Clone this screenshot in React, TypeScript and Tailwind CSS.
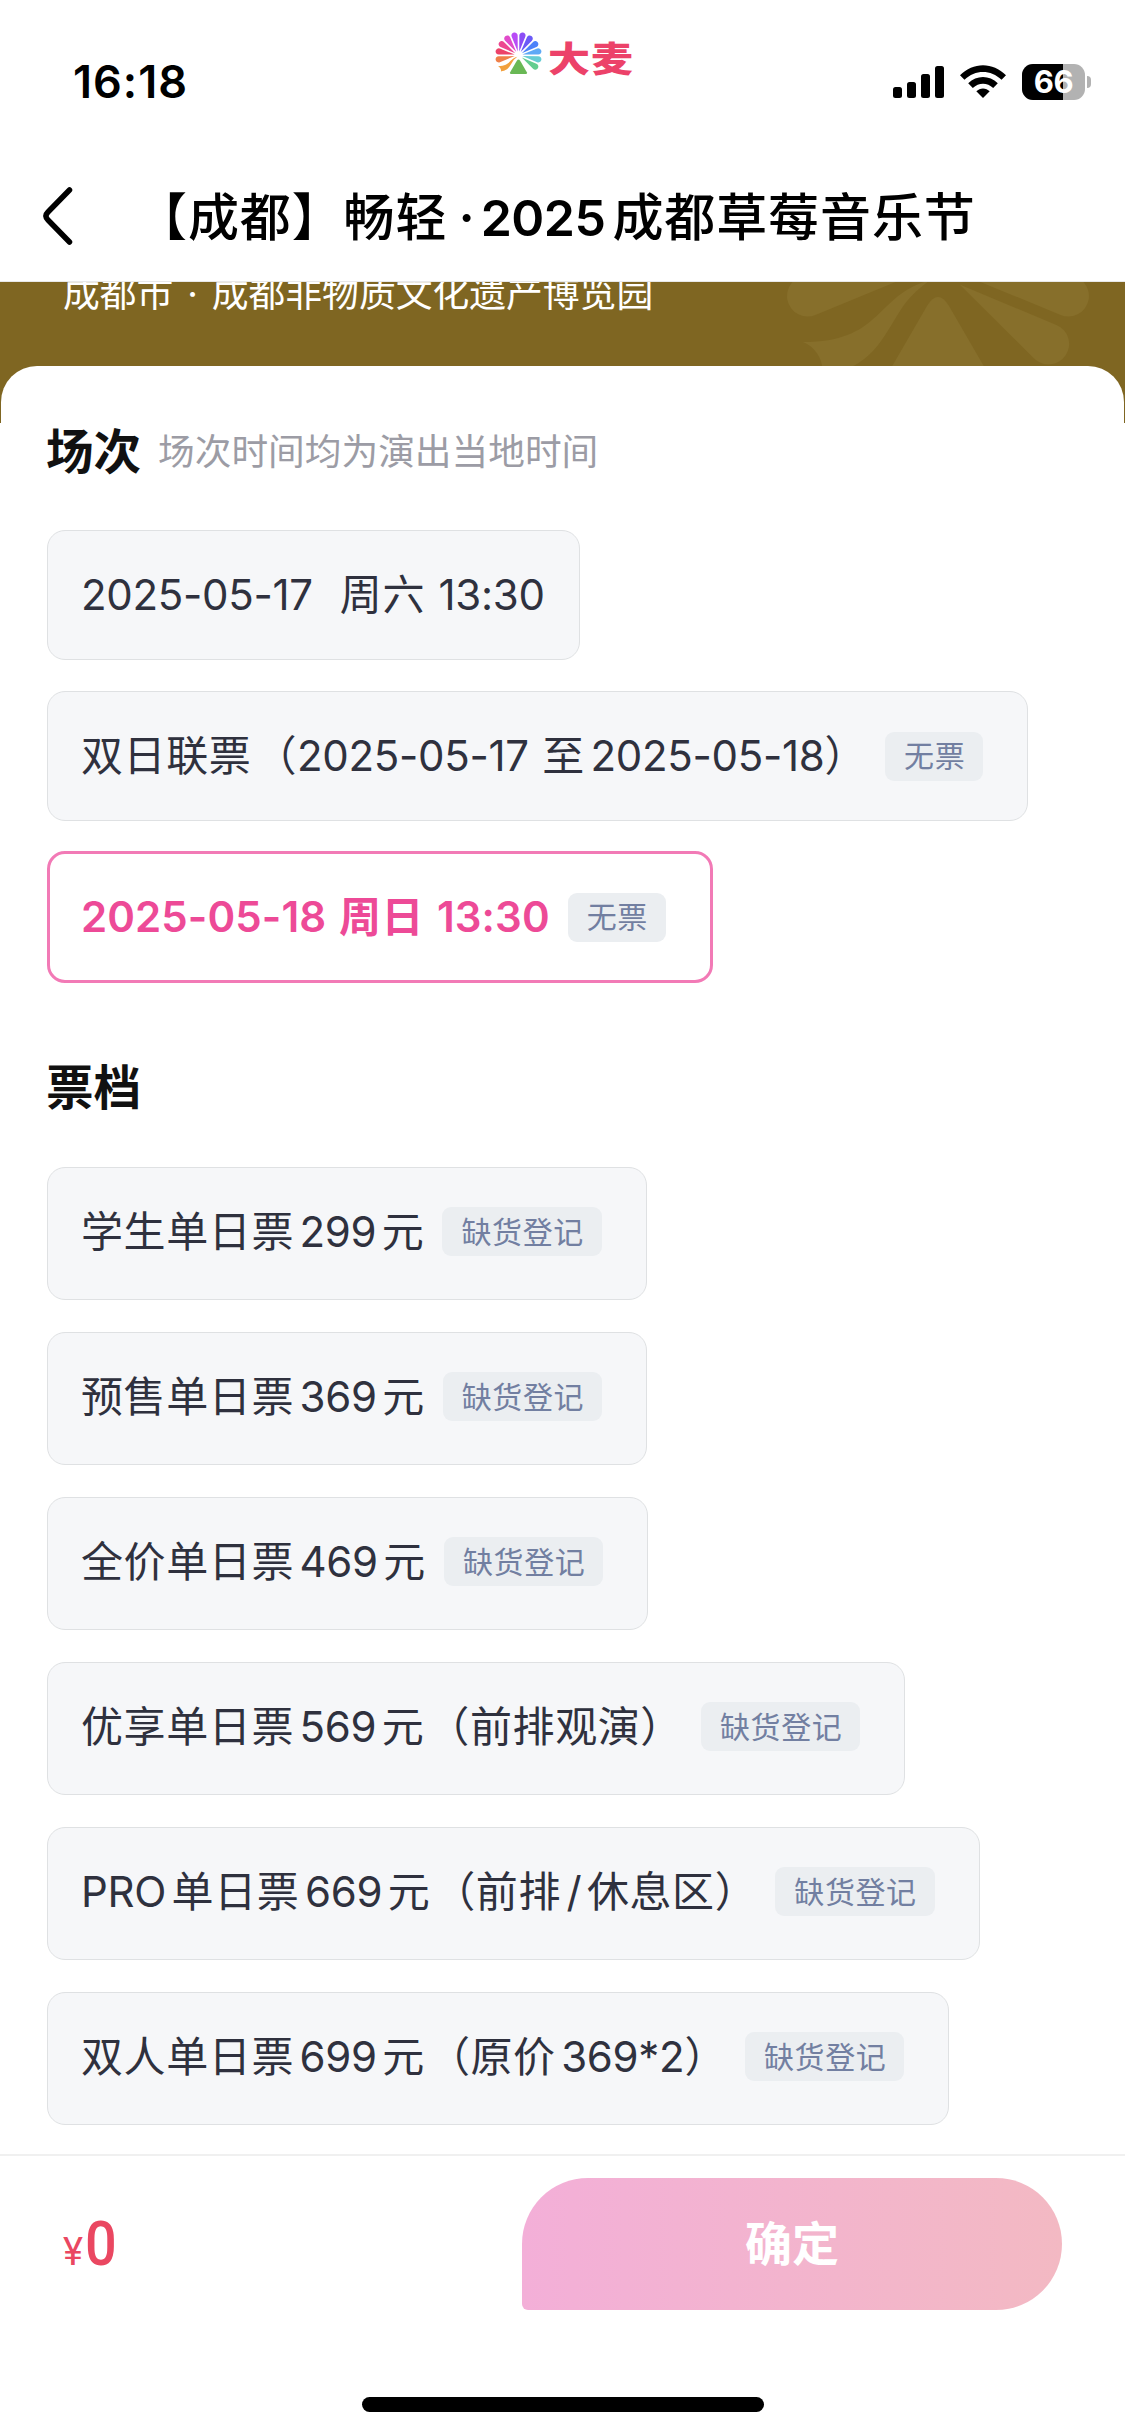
import clsx from "clsx";

const petals = [
    { angle: -101.25, color: "#ef8049" },
    { angle: -78.75, color: "#ec4269" },
    { angle: -56.25, color: "#ec4790" },
    { angle: -33.75, color: "#e14bca" },
    { angle: -11.25, color: "#b84bf6" },
    { angle: 11.25, color: "#8b4df6" },
    { angle: 33.75, color: "#6b5af7" },
    { angle: 56.25, color: "#4c82f9" },
    { angle: 78.75, color: "#5ea9f6" },
    { angle: 101.25, color: "#67cdd3" },
    { angle: 123.75, color: "#63cd8f" },
];

const sessions = [
    { label: "2025-05-17  周六 13:30" },
    { label: "双日联票（2025-05-17 至2025-05-18）", tag: "无票" },
    { label: "2025-05-18 周日 13:30", tag: "无票", active: true },
];

const tiers = [
    "学生单日票299元",
    "预售单日票369元",
    "全价单日票469元",
    "优享单日票569元（前排观演）",
    "PRO单日票669元（前排/休息区）",
    "双人单日票699元（原价369*2）",
];

// one-colour when `color` is given, otherwise the full brand palette
const Flower = ({ color, className }: { color?: string; className?: string }) => (
    <svg viewBox="-154 -154 308 277" className={className}>
        {petals.map((p) => (
            <path
                key={p.angle}
                d="M0-26L20.1-129A20.5 20.5 0 1 0-20.1-129Z"
                transform={`rotate(${p.angle})`}
                fill={color ?? p.color}
            />
        ))}
        <path
            d="M-8 10C-64 26-55 72-135 72C-122 77-113 92-116 106C-66 98-56 69-38 41C-28 25-18 18-8 10Z"
            fill={color ?? "#f2a03d"}
        />
        <path
            d="M-11 36Q0 18 11 36L55 112Q60 122 50 123H-50Q-60 122-55 112Z"
            fill={color ?? "#69b855"}
        />
    </svg>
);

// latin runs get a small gap where they touch a han character
const Mixed = ({ text, bold }: { text: string; bold?: boolean }) => {
    const runs = text.match(/[\x20-\x7e]+|（|[^\x20-\x7e（]+/g) ?? [];
    return (
        <span className="whitespace-pre [word-spacing:2px]">
            {runs.map((run, i) => {
                const latin = /^[\x20-\x7e]/.test(run);
                const prev = runs[i - 1];
                const next = runs[i + 1];
                return (
                    <span
                        key={i}
                        className={clsx(
                            latin ? (bold ? "tracking-[0.1px]" : "tracking-[-0.3px]") : "tracking-[0.6px]",
                            run === "（" && "ml-[3px]",
                            latin && prev && prev !== "（" && !run.startsWith(" ") && "ml-[5.5px]",
                            latin && next && !/^[）]/.test(next) && !run.endsWith(" ") && "mr-[5.5px]"
                        )}
                    >
                        {run}
                    </span>
                );
            })}
        </span>
    );
};

const Tag = ({ text }: { text: string }) => (
    <span className="h-[49px] pl-[19px] pr-[18px] rounded-[9px] flex items-center bg-[#ebeef1] text-[#727fa1] text-[30px] leading-none font-normal tracking-[0.6px]">
        {text}
    </span>
);

const StatusBar = () => (
    <div className="relative h-[150px] flex items-start justify-between pl-[73px] pr-[34px]">
        <span className="mt-[55px] text-[45px] leading-[54px] font-semibold tracking-[1px]">16:18</span>
        <div className="absolute left-[495px] top-[32px] flex">
            <Flower className="w-[47px] h-[42px]" />
            <span className="ml-[6px] mt-[4px] h-[42px] text-[42px] leading-[42px] font-black tracking-[1px] text-[#ec4269] scale-y-[0.84] font-['Noto_Sans_CJK_SC',sans-serif]">
                大麦
            </span>
        </div>
        <div className="mt-[64px] flex items-start">
            <svg width="52" height="36" viewBox="0 0 52 36">
                <rect x="0" y="23" width="9" height="11" rx="2.5" />
                <rect x="14" y="18" width="9" height="16" rx="2.5" />
                <rect x="28" y="10" width="9" height="24" rx="2.5" />
                <rect x="42" y="2" width="9" height="32" rx="2.5" />
            </svg>
            <svg className="ml-[15px]" width="46" height="36" viewBox="0 0 46 36">
                <path d="M0 11.2C13-2.2 33-2.2 46 11.2L41.5 15.8C31 5.3 15 5.3 4.5 15.8Z" />
                <path d="M8.2 19.3C16.6 11 29.4 11 37.8 19.3L33.2 24C27.2 18.3 18.8 18.3 12.8 24Z" />
                <path d="M16.3 27.3C20 23.4 26 23.4 29.7 27.3L23 34Z" />
            </svg>
            <div className="relative ml-[16px] w-[63px] h-[36px] rounded-[11px] overflow-hidden bg-[#b2b2b2] flex items-center justify-center">
                <div className="absolute inset-y-0 left-0 w-[41px] bg-black" />
                <span className="relative text-[31px] leading-[36px] font-bold text-white tracking-[-0.5px]">66</span>
            </div>
            <div className="ml-[2px] mt-[12px] w-[4px] h-[12px] rounded-r-full bg-[#b2b2b2]" />
        </div>
    </div>
);

const Header = () => (
    <div className="h-[132px] flex border-b border-[#e8e8e8]">
        <svg className="ml-[40px] mt-[34px]" width="36" height="64" viewBox="0 0 36 64" fill="none">
            <path
                d="M29.5 6L8 28Q4 32 8 36L29.5 58"
                stroke="black"
                strokeWidth="5.5"
                strokeLinecap="round"
                strokeLinejoin="round"
            />
        </svg>
        <h1 className="ml-[60px] mt-[34px] flex text-[51px] leading-[68px] font-medium whitespace-pre">
            <span className="tracking-[0.9px]">【成都】畅轻</span>
            <span className="ml-[11px] font-semibold">·</span>
            <span className="ml-[6px] text-[50px] font-semibold tracking-[-0.5px]">2025</span>
            <span className="ml-[7px] tracking-[0.9px]">成都草莓音乐节</span>
        </h1>
    </div>
);

export default function App() {
    return (
        <div className="w-[1125px] h-[2436px] bg-white text-black overflow-hidden flex flex-col font-['Inter','Noto_Sans_CJK_SC',sans-serif]">
            <StatusBar />
            <Header />

            <div className="relative h-[141px] shrink-0 overflow-hidden bg-[#7f6622]">
                <Flower color="#876f2b" className="absolute left-[784px] -top-[166px] w-[308px] h-[277px]" />
                <p className="absolute left-[63px] -top-[14px] text-[36.8px] leading-[52px] text-white whitespace-pre [word-spacing:3.5px]">
                    成都市 · 成都非物质文化遗产博览园
                </p>
                <div className="absolute inset-x-px top-[84px] h-[80px] rounded-t-[36px] bg-white" />
            </div>

            <main className="h-[1731px] shrink-0 pl-[47px]">
                <div className="-ml-px h-[107px] pt-px flex">
                    <h2 className="text-[47.5px] leading-[56px] font-bold text-[#111111]">场次</h2>
                    <span className="ml-[17px] text-[36.7px] leading-[56px] text-[#9c9ca5]">场次时间均为演出当地时间</span>
                </div>
                <div className="flex flex-col items-start">
                    {sessions.map((s) => (
                        <div
                            key={s.label}
                            className={clsx(
                                "rounded-[18px] flex items-center text-[42px] leading-none",
                                s.active
                                    ? "-mt-px h-[132px] border-[3px] border-[#f27ab6] bg-white pl-[31px] text-[#ed4a97] font-semibold"
                                    : "mb-[31px] h-[130px] border border-[#dfe1e3] bg-[#f6f7f9] pl-[33px] text-[#2f313e]",
                                s.tag ? "pr-[44px] gap-[18px]" : "pr-[34px]"
                            )}
                        >
                            <Mixed text={s.label} bold={s.active} />
                            {s.tag && <Tag text={s.tag} />}
                        </div>
                    ))}
                </div>
                <h2 className="-ml-px mt-[77px] h-[107px] text-[47.5px] leading-[56px] font-bold text-[#111111]">票档</h2>
                <div className="flex flex-col items-start gap-[32px]">
                    {tiers.map((t) => (
                        <div
                            key={t}
                            className="h-[133px] rounded-[18px] border border-[#dfe1e3] bg-[#f6f7f9] flex items-center gap-[18px] pl-[33px] pr-[44px] pb-[4px] text-[42px] leading-none text-[#2f313e]"
                        >
                            <Mixed text={t} />
                            <Tag text="缺货登记" />
                        </div>
                    ))}
                </div>
            </main>

            <footer className="h-[282px] shrink-0 flex flex-col border-t-2 border-[#f0f0f0] bg-white">
                <div className="mt-[22px] h-[132px] pl-[63px] pr-[63px] flex justify-between">
                    <div className="flex items-baseline text-[#ea4761] font-['Roboto',sans-serif] leading-[132px]">
                        <span className="text-[38px]">¥</span>
                        <span className="ml-[2px] text-[62px] font-medium origin-left scale-x-90">0</span>
                    </div>
                    <button className="w-[540px] h-[132px] rounded-[66px] rounded-bl-[6px] bg-linear-to-r from-[#f3afd8] to-[#f3b9c3] text-white text-[47px] font-bold">
                        确定
                    </button>
                </div>
                <div className="mt-[87px] mx-auto w-[402px] h-[15px] rounded-full bg-black" />
            </footer>
        </div>
    );
}
